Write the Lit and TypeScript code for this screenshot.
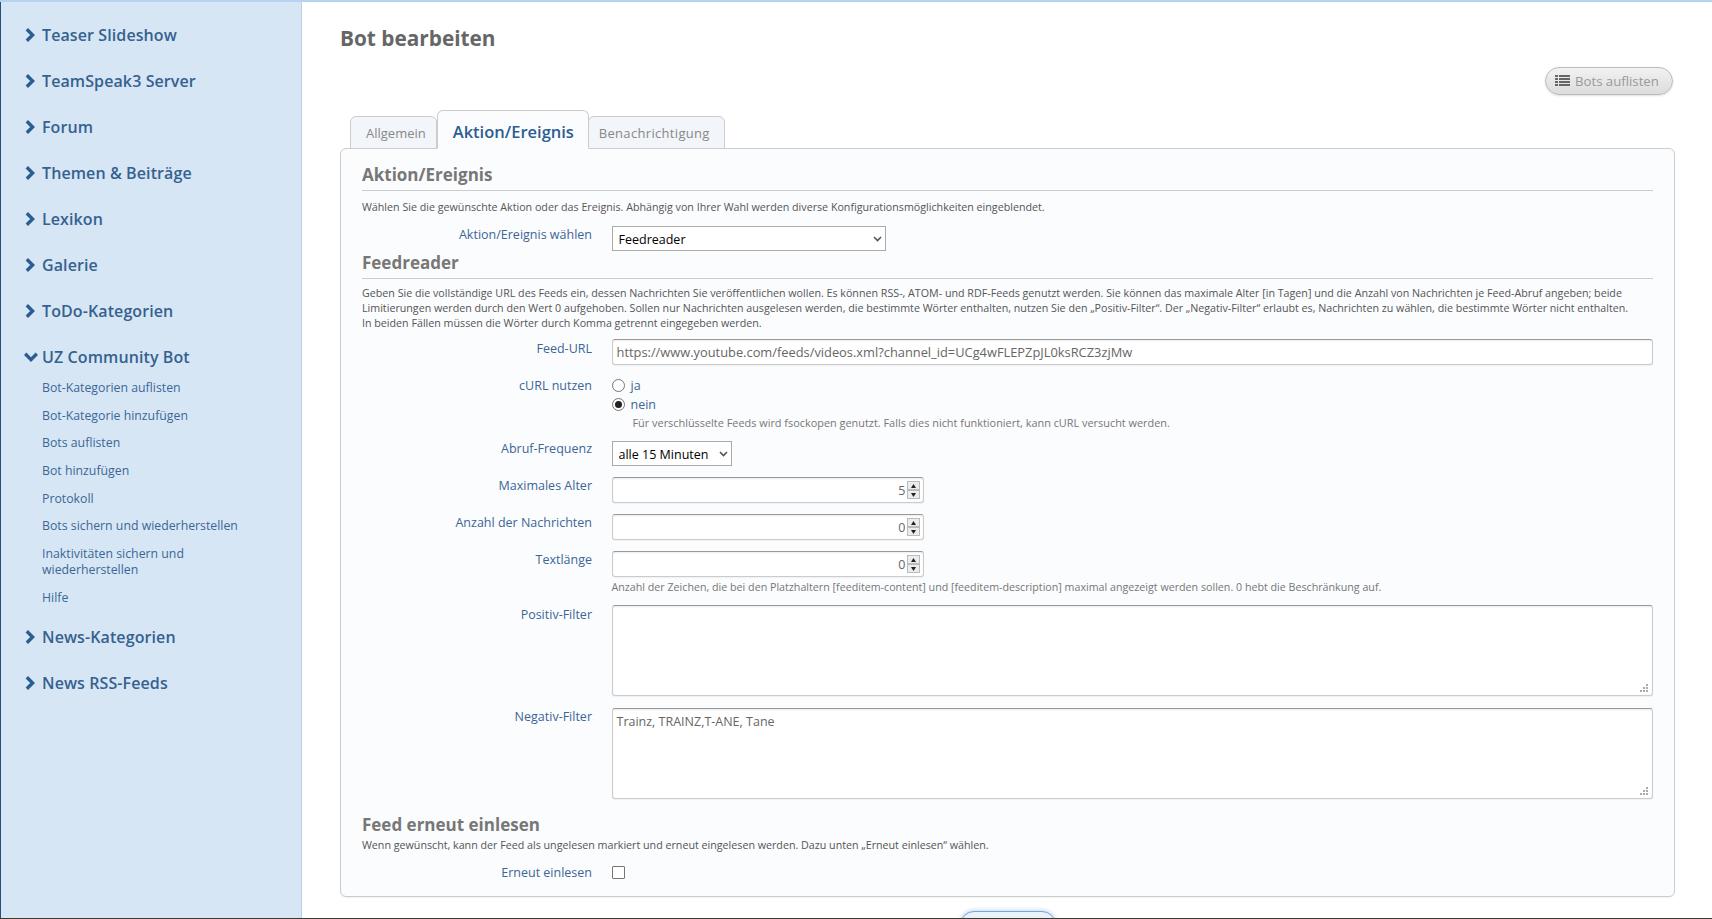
import { LitElement, html, css } from "lit";
import { customElement } from "lit/decorators.js";

const chevR = html`<svg class="chev" viewBox="0 0 10 14" width="10" height="14"><path d="M1.8 1.2 L7.6 7 L1.8 12.8" fill="none" stroke="#2b5d92" stroke-width="3.4"/></svg>`;
const chevD = html`<svg class="chev" viewBox="0 0 14 10" width="14" height="10"><path d="M1.2 1.8 L7 7.6 L12.8 1.8" fill="none" stroke="#2b5d92" stroke-width="3.4"/></svg>`;

const spin = html`<span class="spin"><span class="sb"><svg width="5" height="4" viewBox="0 0 5 4"><path d="M2.5 0 L5 4 H0Z" fill="#222"/></svg></span><span class="sb"><svg width="5" height="4" viewBox="0 0 5 4"><path d="M2.5 4 L5 0 H0Z" fill="#222"/></svg></span></span>`;

@customElement("app-root")
export class AppRoot extends LitElement {
  static styles = css`
    :host { display: block; height: 919px; overflow: hidden; font-family: "Open Sans", "Noto Sans", sans-serif; background: #fff; color: #666; }
    * { box-sizing: border-box; }
    .page { display: flex; height: 919px; border-top: 2px solid #b5d3f1; position: relative; overflow: hidden; }
    .side { width: 302px; flex: none; background: #d7e6f5; border-left: 1px solid #24517f; border-right: 1px solid #b5d0ea; padding: 10px 0 0 24px; color: #35618f; }
    .m { display: flex; align-items: center; height: 46px; font-size: 16px; font-weight: 600; color: #35618f; letter-spacing: .1px; }
    .m .ic { width: 17px; display: flex; justify-content: flex-start; flex: none; }
    .m.open .ic { margin-left: -1px; width: 18px; }
    .subs { padding-left: 17px; margin: -6px 0 2px 0; }
    .sub { font-size: 12.3px; line-height: 16px; padding: 5.85px 0; color: #3b6696; width: 220px; }
    .main { flex: 1; padding: 0 37px 0 38px; min-width: 0; }
    h1 { margin: 0; font-size: 20.8px; font-weight: 700; color: #666; line-height: 30px; padding-top: 21px; }
    .btnrow { display: flex; justify-content: flex-end; padding: 14px 2px 0 0; }
    .btn { height: 28px; width: 128px; border: 1px solid #bbb; border-radius: 14px; background: linear-gradient(#f2f2f2, #dcdcdc); box-shadow: 0 1px 2px rgba(0,0,0,.12); display: flex; align-items: center; padding-left: 9px; gap: 5px; font-size: 13.2px; color: #999; }
    .tabs { display: flex; align-items: flex-end; height: 44px; margin-top: 10px; padding-left: 10px; position: relative; z-index: 1; margin-bottom: -1px; }
    .tab { height: 33px; border: 1px solid #ccc; border-radius: 6px 6px 0 0; background: #f2f5f9; font-size: 13px; color: #888; display: flex; align-items: center; }
    .tab.t1 { padding: 0 10px 0 15px; }
    .tab.t3 { padding: 0 14px 0 10px; letter-spacing: .32px; }
    .tab.a { height: 39px; background: #fbfcfe; border-bottom-color: #fbfcfe; color: #2b5d92; font-size: 16.5px; font-weight: 600; padding: 3px 15px 0; width: 152px; margin: 0 -1px 0 0; z-index: 2; }
    .panel { background: #fbfcfe; border: 1px solid #ccc; border-radius: 6px; height: 749px; padding: 14px 21px 0 21px; box-shadow: 0 1px 1px rgba(0,0,0,.05); }
    h2 { margin: 0; font-size: 17px; font-weight: 700; color: #777; line-height: 24px; }
    h2.line { border-bottom: 1px solid #ccc; padding-bottom: 4px; height: 28px; }
    .desc { font-size: 10.7px; line-height: 15px; color: #555; }
    .row { display: grid; grid-template-columns: 230px 1fr; column-gap: 19.5px; }
    .lbl { text-align: right; color: #3b6696; font-size: 12.5px; line-height: 18px; }
    .lbl.down { padding-top: 1px; }
    .lbl.up { margin-top: -1px; }
    select { appearance: none; border: 1px solid #aaa; border-radius: 0; background: #fff url("data:image/svg+xml,%3Csvg xmlns='http://www.w3.org/2000/svg' width='9' height='6'%3E%3Cpath d='M1 1l3.5 3.5L8 1' fill='none' stroke='%23555' stroke-width='1.6'/%3E%3C/svg%3E") no-repeat right 3px center; font-family: inherit; font-size: 12.5px; color: #000; padding: 1px 6px 0; display: block; height: 25px; }
    .s1 { width: 274px; }
    .s2 { width: 120px; }
    .inp { border: 1px solid #ccc; border-top: 1px solid #999; border-radius: 3px; background: #fff; box-shadow: 0 1px 1px rgba(0,0,0,.05), inset 0 1px 2px rgba(0,0,0,.08); font-size: 12.5px; color: #666; display: block; }
    .url { height: 26px; line-height: 24px; padding: 0 4px; width: 100%; white-space: nowrap; overflow: hidden; font-size: 12.85px; }
    .num { height: 26px; width: 312px; display: flex; align-items: center; justify-content: flex-end; padding-right: 3px; }
    .spin { display: flex; flex-direction: column; width: 13px; height: 18px; margin-left: 1px; }
    .sb { flex: 1; background: #ececec; border: 1px solid #bbb; display: flex; align-items: center; justify-content: center; }
    .area { height: 92px; width: 100%; position: relative; padding: 4px 4px; }
    .area.short { height: 91px; }
    .grip { position: absolute; right: 3px; bottom: 2px; }
    .radio { display: flex; align-items: center; gap: 6px; height: 19px; font-size: 12.5px; color: #3b6696; }
    .rb { width: 13px; height: 13px; border-radius: 50%; border: 1px solid #767676; background: #fff; flex: none; display: flex; align-items: center; justify-content: center; }
    .rb.on::after { content: ""; width: 7px; height: 7px; border-radius: 50%; background: #222; }
    .hint { font-size: 10.7px; line-height: 15px; color: #777; }
    .hint.h1 { font-size: 10.9px; padding: 1px 0 0 21px; }
    .hint.h2 { margin-top: 3px; }
    .cbwrap { padding-top: 2px; }
    .cb { width: 13px; height: 13px; border: 1px solid #767676; border-radius: 1px; background: #fff; display: block; }
    .mt-0 { margin-top: 0; } .mt-8 { margin-top: 8px; } .mt-10 { margin-top: 10px; } .mt-11 { margin-top: 11px; } .mt-7 { margin-top: 7px; } .mt-14 { margin-top: 14px; } .mt-1 { margin-top: 1px; } .mt-12 { margin-top: 12px; } .mt-9 { margin-top: 9px; }
    .submit { display: flex; justify-content: center; padding-top: 14px; }
    .save { width: 96px; height: 28px; border: 1px solid #7aa5d8; border-radius: 14px; background: #e9f1fb; box-shadow: 0 0 5px #a9c8ea; flex: none; }
    .foot { position: absolute; left: 0; right: 0; bottom: 0; height: 1px; background: #3d3a36; }
  `;

  private menu(label: string) {
    return html`<div class="m"><span class="ic">${chevR}</span>${label}</div>`;
  }

  render() {
    const grip = html`<svg class="grip" width="9" height="9" viewBox="0 0 9 9" fill="#aaa"><rect x="6" y="0" width="2" height="2"/><rect x="3" y="3" width="2" height="2"/><rect x="6" y="3" width="2" height="2"/><rect x="0" y="6" width="2" height="2"/><rect x="3" y="6" width="2" height="2"/><rect x="6" y="6" width="2" height="2"/></svg>`;
    return html`
      <div class="page">
        <aside class="side">
          ${["Teaser Slideshow","TeamSpeak3 Server","Forum","Themen & Beiträge","Lexikon","Galerie","ToDo-Kategorien"].map(m => this.menu(m))}
          <div class="m open"><span class="ic">${chevD}</span>UZ Community Bot</div>
          <div class="subs">
            ${["Bot-Kategorien auflisten","Bot-Kategorie hinzufügen","Bots auflisten","Bot hinzufügen","Protokoll","Bots sichern und wiederherstellen","Inaktivitäten sichern und wiederherstellen","Hilfe"].map(s => html`<div class="sub">${s}</div>`)}
          </div>
          ${["News-Kategorien","News RSS-Feeds"].map(m => this.menu(m))}
        </aside>
        <main class="main">
          <h1>Bot bearbeiten</h1>
          <div class="btnrow"><div class="btn"><svg width="15" height="12" viewBox="0 0 15 12" fill="#666"><rect y="0" width="3" height="2"/><rect x="4" y="0" width="11" height="2"/><rect y="3" width="3" height="2"/><rect x="4" y="3" width="11" height="2"/><rect y="6" width="3" height="2"/><rect x="4" y="6" width="11" height="2"/><rect y="9" width="3" height="2"/><rect x="4" y="9" width="11" height="2"/></svg>Bots auflisten</div></div>
          <div class="tabs">
            <div class="tab t1">Allgemein</div>
            <div class="tab a">Aktion/Ereignis</div>
            <div class="tab t3">Benachrichtigung</div>
          </div>
          <section class="panel">
            <h2 class="line">Aktion/Ereignis</h2>
            <div class="desc mt-9">Wählen Sie die gewünschte Aktion oder das Ereignis. Abhängig von Ihrer Wahl werden diverse Konfigurationsmöglichkeiten eingeblendet.</div>
            <div class="row mt-11"><div class="lbl">Aktion/Ereignis wählen</div><select class="s1"><option>Feedreader</option></select></div>
            <h2 class="line mt-0">Feedreader</h2>
            <div class="desc mt-7">Geben Sie die vollständige URL des Feeds ein, dessen Nachrichten Sie veröffentlichen wollen. Es können RSS-, ATOM- und RDF-Feeds genutzt werden. Sie können das maximale Alter [in Tagen] und die Anzahl von Nachrichten je Feed-Abruf angeben; beide Limitierungen werden durch den Wert 0 aufgehoben. Sollen nur Nachrichten ausgelesen werden, die bestimmte Wörter enthalten, nutzen Sie den „Positiv-Filter“. Der „Negativ-Filter“ erlaubt es, Nachrichten zu wählen, die bestimmte Wörter nicht enthalten.<br />In beiden Fällen müssen die Wörter durch Komma getrennt eingegeben werden.</div>
            <div class="row mt-8"><div class="lbl down">Feed-URL</div><div class="inp url">https://www.youtube.com/feeds/videos.xml?channel_id=UCg4wFLEPZpJL0ksRCZ3zjMw</div></div>
            <div class="row mt-11"><div class="lbl down">cURL nutzen</div><div>
              <div class="radio"><span class="rb"></span>ja</div>
              <div class="radio"><span class="rb on"></span>nein</div>
              <div class="hint h1">Für verschlüsselte Feeds wird fsockopen genutzt. Falls dies nicht funktioniert, kann cURL versucht werden.</div>
            </div></div>
            <div class="row mt-11"><div class="lbl up">Abruf-Frequenz</div><select class="s2"><option>alle 15 Minuten</option></select></div>
            <div class="row mt-11"><div class="lbl">Maximales Alter</div><div class="inp num">5${spin}</div></div>
            <div class="row mt-11"><div class="lbl">Anzahl der Nachrichten</div><div class="inp num">0${spin}</div></div>
            <div class="row mt-11"><div class="lbl">Textlänge</div><div><div class="inp num">0${spin}</div>
              <div class="hint h2">Anzahl der Zeichen, die bei den Platzhaltern [feeditem-content] und [feeditem-description] maximal angezeigt werden sollen. 0 hebt die Beschränkung auf.</div></div></div>
            <div class="row mt-10"><div class="lbl down">Positiv-Filter</div><div class="inp area short">${grip}</div></div>
            <div class="row mt-12"><div class="lbl">Negativ-Filter</div><div class="inp area short">Trainz, TRAINZ,T-ANE, Tane${grip}</div></div>
            <h2 class="mt-14">Feed erneut einlesen</h2>
            <div class="desc mt-1">Wenn gewünscht, kann der Feed als ungelesen markiert und erneut eingelesen werden. Dazu unten „Erneut einlesen“ wählen.</div>
            <div class="row mt-11"><div class="lbl">Erneut einlesen</div><div class="cbwrap"><span class="cb"></span></div></div>
          </section>
          <div class="submit"><div class="save"></div></div>
        </main>
        <div class="foot"></div>
      </div>
    `;
  }
}
